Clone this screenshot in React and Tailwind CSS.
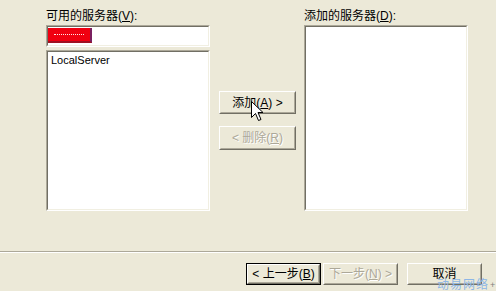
import React from "react";

const FONT = { fontFamily: '"Liberation Sans","Noto Sans CJK SC",sans-serif' };

function Sunken({ className = "", children }) {
  return (
    <div className={"border border-t-[#ACA899] border-l-[#ACA899] border-b-white border-r-white " + className}>
      <div className="w-full h-full border border-t-[#716F64] border-l-[#716F64] border-b-[#F1EFE2] border-r-[#F1EFE2] bg-white">
        {children}
      </div>
    </div>
  );
}

function Btn({ children, disabled, focused, className = "" }) {
  const inner = (
    <div className="w-full h-full border border-t-white border-l-white border-b-[#716F64] border-r-[#716F64] flex items-center justify-center">
      <div className="w-full h-full border border-t-[#ECE9D8] border-l-[#ECE9D8] border-b-[#ACA899] border-r-[#ACA899] flex items-center justify-center">
        <span
          className={"text-[12px] leading-[14px] whitespace-nowrap " + (disabled ? "text-[#ACA899]" : "text-black")}
          style={disabled ? { textShadow: "1px 1px 0 #ffffff" } : undefined}
        >
          {children}
        </span>
      </div>
    </div>
  );
  return (
    <div className={"bg-[#ECE9D8] " + (focused ? "border border-black " : "") + className}>
      {inner}
    </div>
  );
}

export default function App() {
  return (
    <div className="w-[496px] h-[291px] bg-[#ECE9D8] relative overflow-hidden" style={FONT}>
      <div className="flex pl-[46px] pt-[8px] h-[251px]">
        {/* left column */}
        <div className="w-[164px] flex flex-col">
          <div className="h-[16px] text-[12px] leading-[16px] text-black whitespace-nowrap">
            可用的服务器(<span className="underline">V</span>):
          </div>
          <Sunken className="mt-[1px] h-[22px]">
            <div className="pt-[1px] pl-0">
              <div className="w-[44px] h-[15px] bg-[#F00010] border-r-2 border-b-2 border-r-[#7A2060] border-b-[#A01020] flex items-center pl-[6px]">
                <div className="w-[30px] h-0 border-t border-dotted border-white opacity-90" />
              </div>
            </div>
          </Sunken>
          <Sunken className="mt-[3px] h-[161px]">
            <div className="pl-[3px] pt-[2px] text-[11px] leading-[13px] text-black" style={{ fontFamily: '"Liberation Sans",sans-serif' }}>
              LocalServer
            </div>
          </Sunken>
        </div>

        {/* middle column */}
        <div className="w-[77px] ml-[9px] flex flex-col pt-[83px]">
          <Btn className="h-[23px]">
            添加(<span className="underline">A</span>) &gt;
          </Btn>
          <Btn disabled className="h-[24px] mt-[12px]">
            &lt; 删除(<span className="underline">R</span>)
          </Btn>
        </div>

        {/* right column */}
        <div className="w-[164px] ml-[8px] flex flex-col">
          <div className="h-[16px] text-[12px] leading-[16px] text-black whitespace-nowrap">
            添加的服务器(<span className="underline">D</span>):
          </div>
          <Sunken className="mt-[1px] h-[186px]" />
        </div>
      </div>

      {/* separator */}
      <div className="h-[2px] border-t border-t-[#ACA899] border-b border-b-white" />

      {/* bottom buttons */}
      <div className="flex pl-[246px] pt-[10px]">
        <Btn focused className="w-[75px] h-[22px]">
          &lt; 上一步(<span className="underline">B</span>)
        </Btn>
        <Btn disabled className="w-[75px] h-[22px] ml-[2px]">
          下一步(<span className="underline">N</span>) &gt;
        </Btn>
        <Btn className="w-[75px] h-[22px] ml-[9px]">取消</Btn>
      </div>

      {/* watermark */}
      <div className="absolute left-[437px] top-[277px] text-[12px] leading-[13px] text-[#8DB6E6] tracking-[1px] whitespace-nowrap" style={{ fontFamily: '"Noto Sans CJK SC",sans-serif' }}>
        动易网络
      </div>
      <div className="absolute left-[490px] top-[281px] text-[9px] leading-[9px] text-[#808080]">+</div>

      {/* mouse cursor */}
      <svg className="absolute left-[251px] top-[101px]" width="13" height="21" viewBox="0 0 13 21">
        <path d="M0.5 0.5 L0.5 16.5 L4.5 12.5 L7.5 19.5 L10 18.5 L7 11.5 L12 11.5 Z" fill="#ffffff" stroke="#000000" strokeWidth="1" strokeLinejoin="miter" />
      </svg>
    </div>
  );
}
